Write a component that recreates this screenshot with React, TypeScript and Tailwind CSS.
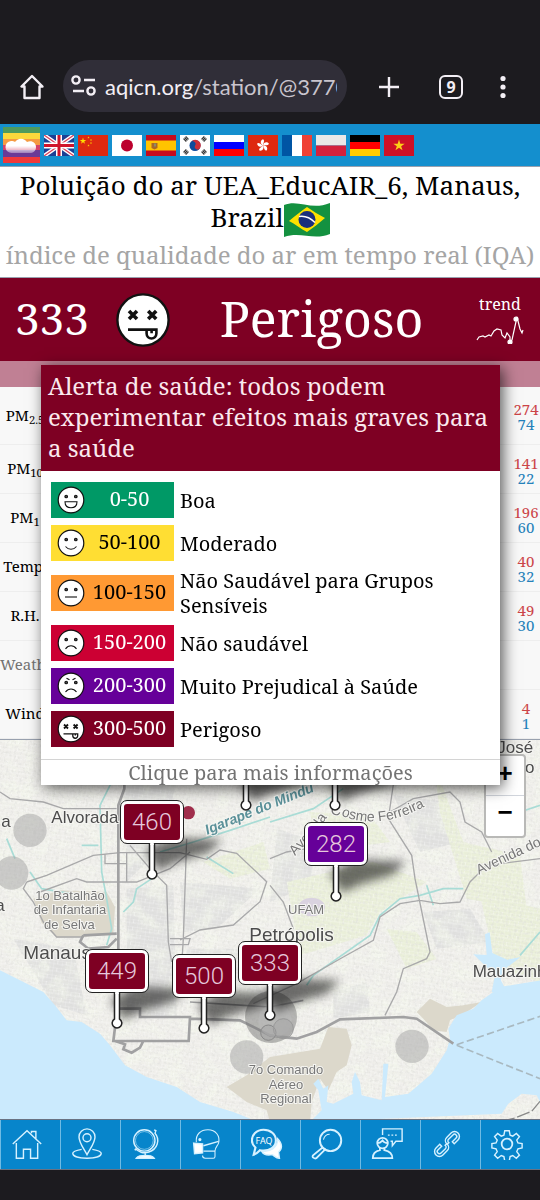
import type { ReactNode } from "react";
import clsx from "clsx";

type Mood = "laugh" | "smile" | "flat" | "sad" | "angry" | "dead";

const levels: { range: string; label: string; mood: Mood; className: string }[] = [
  { range: "0-50", label: "Boa", mood: "laugh", className: "bg-[#009966] text-white" },
  { range: "50-100", label: "Moderado", mood: "smile", className: "bg-[#ffde33] text-black" },
  { range: "100-150", label: "Não Saudável para Grupos Sensíveis", mood: "flat", className: "bg-[#ff9933] text-black" },
  { range: "150-200", label: "Não saudável", mood: "sad", className: "bg-[#cc0033] text-white" },
  { range: "200-300", label: "Muito Prejudical à Saúde", mood: "angry", className: "bg-[#660099] text-white" },
  { range: "300-500", label: "Perigoso", mood: "dead", className: "bg-[#7e0023] text-white" },
];

const readings = [
  { name: "PM", sub: "2.5", max: "274", min: "74" },
  { name: "PM", sub: "10", max: "141", min: "22" },
  { name: "PM", sub: "1", max: "196", min: "60" },
  { name: "Temp.", max: "40", min: "32" },
  { name: "R.H.", max: "49", min: "30" },
  { name: "Weather", muted: true },
  { name: "Wind", max: "4", min: "1" },
];

// x / y is the tip of the pin on the map canvas
const pins = [
  { x: 246, y: 67 },
  { x: 335, y: 67 },
  { value: "460", x: 152, y: 136, className: "bg-[#7e0023]" },
  { value: "282", x: 336, y: 158, className: "bg-[#660099]" },
  { value: "449", x: 117, y: 285, className: "bg-[#7e0023]" },
  { value: "500", x: 204, y: 290, className: "bg-[#7e0023]" },
  { value: "333", x: 270, y: 277, className: "bg-[#7e0023]" },
];

function Face({ mood, className }: { mood: Mood; className?: string }) {
  return (
    <svg viewBox="0 0 28 28" className={className} fill="none" stroke="#111" strokeWidth="1.1" aria-hidden="true">
      <circle cx="14" cy="14" r="12.8" fill="#fff" strokeWidth="1.2" />
      {mood === "dead" ? (
        <g strokeWidth="1.8">
          <path d="M7 9.500l4 4M11 9.500l-4 4M16.600 9.500l4 4M20.600 9.500l-4 4" />
          <path d="M6.500 18.800h14.200v2a2.400 2.400 0 0 1-4.900 0v-2M18.300 18.800v1.800" strokeWidth="1.300" />
        </g>
      ) : (
        <g>
          <circle cx="9.2" cy="10.5" r="1.3" fill="#555" />
          <circle cx="18.8" cy="10.5" r="1.3" fill="#555" />
        </g>
      )}
      {mood === "laugh" && <path d="M8 15.7h12c0 4-2.5 6-6 6s-6-2-6-6z" />}
      {mood === "smile" && <path d="M8.5 17.5c3 3.6 8 3.6 11 0" />}
      {mood === "flat" && <path d="M8 18h12" />}
      {mood === "sad" && <path d="M8.5 19.8c3-4 8-4 11 0" />}
      {mood === "angry" && (
        <g>
          <path d="M8.5 20c3-4 8-4 11 0" />
          <path d="M9.5 6.2l3 1.6M18.5 6.2l-3 1.6" />
        </g>
      )}
    </svg>
  );
}

function Logo() {
  return (
    <svg viewBox="0 0 37 36" className="h-9 w-[37px]" aria-hidden="true">
      <rect width="37" height="6" fill="#4f9a5c" />
      <rect y="6" width="37" height="6" fill="#fbd83c" />
      <rect y="12" width="37" height="6" fill="#f59b42" />
      <rect y="18" width="37" height="5" fill="#d5436a" />
      <rect y="23" width="37" height="7" fill="#6a3a96" />
      <rect y="30" width="37" height="6" fill="#f0393a" />
      <defs>
        <linearGradient id="cloud" x1="0" y1="0" x2="0" y2="1">
          <stop offset="0.5" stopColor="#fff" />
          <stop offset="1" stopColor="#fff" stopOpacity="0.35" />
        </linearGradient>
      </defs>
      <path d="M9 26a6 6 0 0 1-1-12c2 0 3 0 4 1a7 6.500 0 0 1 12 0c5-2 9 1 9 5s-3 6-6 6z" fill="url(#cloud)" />
    </svg>
  );
}

const star = "M0-1 .22-.31H.95L.36.12.59.81 0 .38-.59.81-.36.12-.95-.31H-.22z";

const flags: { lang: string; art: ReactNode }[] = [
  {
    lang: "English",
    art: (
      <>
        <path fill="#1d3f94" d="M0 0h30v21H0z" />
        <path d="M0 0l30 21M30 0L0 21" stroke="#fff" strokeWidth="4" />
        <path d="M0 0l30 21M30 0L0 21" stroke="#d8405a" strokeWidth="1.3" />
        <path d="M15 0v21M0 10.500h30" stroke="#fff" strokeWidth="6" />
        <path d="M15 0v21M0 10.500h30" stroke="#cf142b" strokeWidth="3" />
      </>
    ),
  },
  {
    lang: "中文",
    art: (
      <>
        <path fill="#de2910" d="M0 0h30v21H0z" />
        <g fill="#ffde00">
          <path d={star} transform="translate(5 6) scale(3.400)" />
          <path d={star} transform="translate(10.500 2.500) scale(1.200)" />
          <path d={star} transform="translate(13 5) scale(1.200)" />
          <path d={star} transform="translate(13 8) scale(1.200)" />
          <path d={star} transform="translate(10.500 10.500) scale(1.200)" />
        </g>
      </>
    ),
  },
  {
    lang: "日本語",
    art: (
      <>
        <path fill="#fff" d="M0 0h30v21H0z" />
        <circle cx="15" cy="10.500" r="6" fill="#bc002d" />
      </>
    ),
  },
  {
    lang: "Español",
    art: (
      <>
        <path fill="#c60b1e" d="M0 0h30v21H0z" />
        <path fill="#ffc400" d="M0 5.500h30v10H0z" />
        <path fill="#a8672a" d="M5.500 8h6v5l-3 1.500L5.500 13z" />
        <path fill="#8c8c6a" d="M8 8.500h2v3H8z" />
      </>
    ),
  },
  {
    lang: "한국어",
    art: (
      <>
        <path fill="#fff" d="M0 0h30v21H0z" />
        <circle cx="15" cy="10.500" r="5.500" fill="#0f4a9c" />
        <path d="M10.400 7.500a5.500 5.500 0 0 1 9.700 5.500 2.700 2.700 0 0 1-5-2.500 2.700 2.700 0 0 0-4.700-3z" fill="#cd2e3a" />
        <path d="M4.500 5.500l3-3M22.500 2.500l3 3M4.500 15.500l3 3M22.500 18.500l3-3" stroke="#333" strokeWidth="4" strokeDasharray="1.200 .400" />
      </>
    ),
  },
  {
    lang: "Русский",
    art: (
      <>
        <path fill="#fff" d="M0 0h30v7H0z" />
        <path fill="#00f" d="M0 7h30v7H0z" />
        <path fill="#f00" d="M0 14h30v7H0z" />
      </>
    ),
  },
  {
    lang: "繁體中文",
    art: (
      <>
        <path fill="#de2910" d="M0 0h30v21H0z" />
        <g fill="#fff" transform="translate(15 10.500)">
          {[0, 72, 144, 216, 288].map((a) => (
            <path key={a} d="M0 0C-3-1.500-3-5 0-6.200 2-5 .5-3 0 0z" transform={`rotate(${a})`} />
          ))}
        </g>
      </>
    ),
  },
  {
    lang: "Français",
    art: (
      <>
        <path fill="#0055a4" d="M0 0h10v21H0z" />
        <path fill="#fff" d="M10 0h10v21H10z" />
        <path fill="#ef4135" d="M20 0h10v21H20z" />
      </>
    ),
  },
  {
    lang: "Polski",
    art: (
      <>
        <path fill="#e9e8e7" d="M0 0h30v10.500H0z" />
        <path fill="#d4213d" d="M0 10.500h30V21H0z" />
      </>
    ),
  },
  {
    lang: "Deutsch",
    art: (
      <>
        <path fill="#000" d="M0 0h30v7H0z" />
        <path fill="#f00" d="M0 7h30v7H0z" />
        <path fill="#fc0" d="M0 14h30v7H0z" />
      </>
    ),
  },
  {
    lang: "Tiếng Việt",
    art: (
      <>
        <path fill="#ce1126" d="M0 0h30v21H0z" />
        <path d={star} transform="translate(15 10.500) scale(6)" fill="#fcd116" />
      </>
    ),
  },
];

const tools: { name: string; icon: ReactNode }[] = [
  {
    name: "Home",
    icon: <path d="M2 18L18 3l16 15M6 17v17h8V24h8v10h8V17M23 6V4h5v8" />,
  },
  {
    name: "Location",
    icon: (
      <>
        <path d="M18 30C13 21 9 16 9 10a9 9 0 0 1 18 0c0 6-4 11-9 20z" />
        <circle cx="18" cy="11" r="4.500" />
        <path d="M12 24C6 25 2 26 2 28.500 2 32 9 34 18 34s16-2 16-5.500c0-2.500-4-3.500-10-4.500" />
      </>
    ),
  },
  {
    name: "World",
    icon: (
      <>
        <circle cx="15" cy="14" r="12" />
        <circle cx="15" cy="14" r="10" strokeWidth=".6" />
        <path d="M26 2l2 1-1 3c6 7 3 18-7 21-6 2-12 0-15-4M4 24l2 1M16 28v4" />
        <path d="M6 34c2-3 5-3 10-3s8 0 10 3z" fill="#fff" />
      </>
    ),
  },
  {
    name: "Mask",
    icon: (
      <>
        <path d="M6 16C5 7 11 2 19 2c9 0 14 7 12 15-1 3-4 5-4 9v6c0 1-1 2-2 2h-9c-2 0-3-1-3-3" strokeWidth="1.2" />
        <path d="M14 20l17-5M14 26h13" />
        <path d="M3 17l10 1v10l-9 1z" fill="#fff" />
        <circle cx="10" cy="13" r="1" fill="#fff" />
      </>
    ),
  },
  {
    name: "FAQ",
    icon: (
      <>
        <path d="M30 12c6 6 5 12 1 15l1 7c-4 0-6-3-8-4-5 1-10 0-12-4 10 1 18-4 18-14z" fill="#fff" />
        <path
          d="M14 2C6 2 1 8 1 14c0 4 2 6 4 8l-2 8c4-1 5-3 7-5 11 2 18-4 18-11S22 2 14 2z"
          fill="#0785cb"
          strokeWidth="2.400"
        />
        <text x="14.500" y="18" fontSize="10" fontFamily="Noto Sans, sans-serif" textAnchor="middle" fill="#fff" stroke="none">
          FAQ
        </text>
      </>
    ),
  },
  {
    name: "Search",
    icon: (
      <>
        <circle cx="22" cy="14" r="12" strokeWidth="2.200" />
        <path d="M14 13c1-4 4-6 7-6" strokeWidth="1.2" />
        <path d="M13 22L2 31c-1 2 2 4 4 3l10-10z" strokeWidth="2" />
      </>
    ),
  },
  {
    name: "Community",
    icon: (
      <>
        <path d="M13 8V1h22v14h-7l-4 5v-5h-2M19 8h2M23 8h2M27 8h2" />
        <circle cx="13" cy="17" r="6" strokeWidth="2" />
        <path d="M7 17c4 0 5-2 6-3 1 2 3 3 6 3M10 22v3c-5 1-8 3-8 9h22c0-6-4-8-9-9v-3" strokeWidth="2" />
      </>
    ),
  },
  {
    name: "Links",
    icon: (
      <g transform="rotate(-45 18 18)">
        <path d="M18 18h-2v-1a5 5 0 0 1 5-5h7a5.500 5.500 0 0 1 0 11h-6v-3h6a2.500 2.500 0 0 0 0-5h-7a2.500 2.500 0 0 0-2.500 3z" transform="translate(2 .5)" />
        <path d="M18 18h2v1a5 5 0 0 1-5 5H8a5.500 5.500 0 0 1 0-11h6v3H8a2.500 2.500 0 0 0 0 5h7a2.500 2.500 0 0 0 2.500-3z" transform="translate(-2 -.5)" />
      </g>
    ),
  },
  {
    name: "Settings",
    icon: (
      <>
        <circle cx="18" cy="18" r="6" strokeWidth="2" />
        <path d="M15.500 3h5l1 5 3 1.200 4-3 3.500 3.500-3 4 1.300 3 4.700.800v5l-4.700 1-1.300 3 3 4-3.500 3.500-4-3-3 1.200-1 5h-5l-1-5-3-1.200-4 3L4 30.500l3-4-1.300-3-4.700-1v-5l4.700-.800 1.300-3-3-4L7.500 6.200l4 3 3-1.200z" />
      </>
    ),
  },
];

function BrowserBar() {
  return (
    <header className="flex h-[124px] items-end bg-[#1c1b1f] pb-3 pl-5 text-[#f3eff5]">
      <button aria-label="Home" className="flex h-[50px] w-6 shrink-0 items-center">
        <svg viewBox="0 0 24 26" className="h-[26px] w-6" fill="none" stroke="currentColor" strokeWidth="2.400" strokeLinejoin="round">
          <path d="M1.500 12.500H4.500v11.500h15V12.500h3L12 2z" />
        </svg>
      </button>
      <button className="ml-[19px] flex h-[52px] min-w-0 flex-1 items-center rounded-full bg-[#302e38] pr-[10px] pl-2 font-[Lato,sans-serif] text-[22px]">
        <svg viewBox="0 0 26 22" className="h-[22px] w-[26px] shrink-0" fill="none" stroke="currentColor" strokeWidth="2.400">
          <circle cx="5" cy="5" r="3.600" />
          <path d="M13 5h11M2 16h11" />
          <circle cx="20" cy="16" r="3.600" />
        </svg>
        <span className="ml-2 min-w-0 flex-1 overflow-hidden text-left whitespace-nowrap">
          aqicn.org<span className="text-[#c9c5ce]">/station/@3770</span>
        </span>
      </button>
      <button aria-label="New tab" className="ml-[30px] flex h-[50px] w-6 shrink-0 items-center">
        <svg viewBox="0 0 24 24" className="size-6" stroke="currentColor" strokeWidth="2.400">
          <path d="M12 2v20M2 12h20" />
        </svg>
      </button>
      <button aria-label="Tabs" className="ml-[38px] flex h-[50px] w-6 shrink-0 items-center">
        <span className="flex size-6 items-center justify-center rounded-md border-2 border-current font-['Open_Sans',sans-serif] text-base leading-5 font-bold">
          9
        </span>
      </button>
      <button aria-label="More" className="mr-[25px] ml-7 flex h-[50px] w-6 shrink-0 items-center">
        <svg viewBox="0 0 24 24" className="size-6" fill="currentColor">
          <circle cx="12" cy="3.500" r="2.600" />
          <circle cx="12" cy="12" r="2.600" />
          <circle cx="12" cy="20.500" r="2.600" />
        </svg>
      </button>
    </header>
  );
}

function BrazilFlag() {
  return (
    <svg viewBox="0 0 46 36" className="inline-block h-9 w-[46px] align-middle" aria-label="Brazil">
      <path d="M0 3c15-6 27 6 46-2v31c-17 7-29-3-46 3z" fill="#149140" />
      <path d="M5 19C11 14 17 9 23 5c6 4 12 8 18 11-6 5-12 10-18 14C17 27 11 22 5 19z" fill="#fde100" />
      <circle cx="23" cy="17.500" r="8.500" fill="#1a2f7c" />
      <path d="M15 14.500c6-1 12 2 16 6" stroke="#fff" strokeWidth="1.500" fill="none" />
    </svg>
  );
}

// The canvas uses three units per pixel
function MapDrawing() {
  return (
    <svg viewBox="0 -126 1620 1140" preserveAspectRatio="xMinYMin slice" className="absolute inset-0 size-full" fill="none" aria-hidden="true">
      <defs>
        <filter id="terrain" x="0" y="0" width="1" height="1">
          <feTurbulence type="fractalNoise" baseFrequency="0.02" numOctaves="4" seed="8" />
          <feColorMatrix values="0 0 0 0 .91  0 0 0 0 .94  0 0 0 0 .84  3 0 0 0 -1.200" />
        </filter>
        <filter id="grain" x="0" y="0" width="1" height="1">
          <feTurbulence type="fractalNoise" baseFrequency="0.12" numOctaves="3" seed="3" />
          <feColorMatrix values="0 0 0 0 .72  0 0 0 0 .72  0 0 0 0 .70  3 0 0 0 -1.400" />
        </filter>
        <filter id="soft" x="-50%" y="-50%" width="200%" height="200%">
          <feGaussianBlur stdDeviation="14" />
        </filter>
        <pattern id="streets" width="26" height="22" patternUnits="userSpaceOnUse" patternTransform="rotate(8)">
          <path d="M0 0h26M0 0v22M13 0v11M0 11h26" stroke="#fff" strokeWidth="2" strokeOpacity=".5" />
        </pattern>
      </defs>

      <rect y="-126" width="1620" height="1140" fill="#efeeea" />
      <g fill="#e0e0df">
        <path d="M370 -60L540 -40 480 200 380 300zM380 320l140-10 10 400-150-20zM540 300l240 20-130 120-100 10zM560 500h160l70 140-230 10zM830 140l120 40-20 130-120 50zM1180 40l160 20 40 120-120 30zM1270 390l140-10 60 100-160 20zM1000 630l100-30 10 90-110 20zM40 470l180 30 40 200-100-30z" />
      </g>
      <rect y="-126" width="1620" height="1140" filter="url(#terrain)" opacity=".6" />
      <g fill="#eaefd9">
        <path d="M610 240l180-60 20 80-120 30zM860 300l260-60 160 60-140 90-40 70-200 60zM1300 -60l90 240 170 40 20 160-180-30-80-260zM1160 440l90 10 60 80-90 30zM1440 340l180 40v220l-130-40zM930 90l180 10 60 80-220 30z" />
      </g>
      <rect y="-126" width="1620" height="1140" fill="url(#streets)" />
      <rect y="-126" width="1620" height="1140" filter="url(#grain)" opacity=".5" />

      <g fill="#dcd8cb">
        <path d="M100 350l80-25 140 5 25 45-5 78-90 12-80 2-45-45z" />
        <path d="M680 915l60-35 70-55 150-25 25-65 55 5 15 50-15 60-30 20-25 55-25-35-25 70-5 60H810l-10-35-60-25z" />
        <path d="M1250 690l40-40 50 25 50-5 55-10-45 30-50 25-10 35-40-5-30-35z" />
      </g>
      <ellipse cx="935" cy="375" rx="40" ry="28" fill="#dad3e0" />

      <g fill="#cbeafd">
        <path d="M0 565l60 30 70 35 35 40 35 45 45 5 55 35 30 35 45 60 65 35 90 30 70 45 100 30 60 24H0z" />
        <path d="M930 1020l35-35-10-60-15-20 15-15 15 30 15-10-5 50 20 5 60-30-5-35 10-30 15 30 5 40 60 15 5-110h15l-10 100 70-10 70-60 45-70 10-35-5-30 25-40 50-20 25-25 35-25 20-15 60-10 65-10v375l-15-30-45-5-40 30-20 30z" />
        <path d="M1475 630l10-50-15-15-50-48 40 2-5-62 14-6 8 62 45 20 40-8-50 38-10 30 20 40z" />
      </g>

      <g stroke="#a9dcd6" strokeWidth="5">
        <path d="M350 -30l-50 100 5 200 15 80 15 90-15 50M245 190h50M20 170l25 60M90 270l35 50 120 20M810 120l130-40 90-60M370 390l30-30 10-40 60-40M480 210l100-30 110-35 120-40M620 225l80 50M920 610l20-30 170-120 30-60 60-50 60-10 70-20h60M1280 310l20 60M1560 520l60-70M1560 90l60-20" />
      </g>

      <g stroke="#a9a9aa" strokeWidth="4">
        <path d="M0 30l30 20 100 10 60 20h160M80 300l60-20 140-60 80-8h180l80 20 40-28 50 10 90 85-20 60-80 70-100 15-60 30M80 300l-10 20 30 40 30 60 40 45h80M120 330l110-40 30 10h150l100-40 60-50M380 210v90M390 190l60 70 50 50 5 170 10 60M560 170l-10 300-5 80M510 470h60l-5 18h-55M315 215v30h65" />
        <path d="M810 230l50-20 60-10M810 310l40 50 30 80M1190 -60l-25 170 70 110 10 70 45 220-10 20-70 30-20 70-35 70M1170 90l70-40 110-20 30 30 15 60 50 30 30 60M1620 230l-160 20-50 50-30 60-60 5-60-10-60 10-60 40-20 70-90 50-140 80-130 60" />
      </g>
      <g stroke="#a1a1a2" strokeWidth="8">
        <path d="M355 540V70l18-50v-150" />
        <path d="M250 460l100-5M250 460l-10 20 25 20 60-5 25-25M345 680h75v25h150l-4 72H340l5-40M345 777l30 10-5 15 25 10 25-15 10-20M570 710l150 5 90 45 80 10 60-20 70-38 190-7 40 5 110 75" />
        <path d="M570 660l240 15 100-20" strokeWidth="5" />
      </g>
      <path d="M1370 788l250-85M1370 790l250 100" stroke="#a9b9c0" strokeWidth="5" strokeDasharray="22 10" />
      <path d="M1505 1018l40-10 50-20 25-30" stroke="#888" strokeWidth="4" strokeDasharray="40 8" />

      <g fill="#a3a3a3" fillOpacity=".5">
        <circle cx="90" cy="145" r="50" />
        <circle cx="35" cy="273" r="50" />
        <circle cx="740" cy="825" r="50" />
        <circle cx="1236" cy="793" r="50" />
        <circle cx="813" cy="705" r="78" fill="#777" />
        <circle cx="825" cy="715" r="50" fill="#bbb" />
        <circle cx="805" cy="752" r="23" stroke="#888" strokeWidth="3" />
        <circle cx="850" cy="740" r="30" stroke="#999" strokeWidth="3" />
      </g>
      <circle cx="565" cy="92" r="20" fill="#a02f4c" />

      <g fill="#000" fillOpacity=".55" filter="url(#soft)">
        {pins.map((pin) => (
          <path key={pin.x} d="M-20-75l70-40 160 5-40 40-100 30-50 25z" transform={`translate(${pin.x * 3} ${pin.y * 3 - 126})`} />
        ))}
      </g>

      <g fill="#4c4c4c" fontFamily="Liberation Sans, sans-serif" stroke="#f5f5f2" strokeWidth="6" paintOrder="stroke">
        <text x="154" y="122" fontSize="51">Alvorada</text>
        <text x="4" y="134" fontSize="51">a</text>
        <text x="-14" y="388" fontSize="51">a</text>
        <text x="70" y="532" fontSize="57">Manaus</text>
        <text x="748" y="478" fontSize="57">Petrópolis</text>
        <text x="1418" y="585" fontSize="51">Mauazinho</text>
        <text x="1492" y="-86" fontSize="51">José</text>
        <text x="1575" y="-28" fontSize="51">o</text>
        <g fill="#777" fontSize="39">
          <text x="864" y="395">UFAM</text>
          <g textAnchor="middle">
            <text x="210" y="353">1o Batalhão</text>
            <text x="210" y="396">de Infantaria</text>
            <text x="208" y="442">de Selva</text>
            <text x="858" y="876">7o Comando</text>
            <text x="858" y="920">Aéreo</text>
            <text x="858" y="962">Regional</text>
          </g>
        </g>
        <g fill="#777" fontSize="42">
          <path id="ferreira" d="M885 222C910 190 950 160 970 122 985 95 1010 95 1040 107 1140 135 1210 110 1320 50" stroke="none" fill="none" />
          <text>
            <textPath href="#ferreira">Avenida Cosme Ferreira</textPath>
          </text>
          <text transform="translate(1436 278) rotate(-25)">Avenida do</text>
        </g>
        <text transform="translate(622 158) rotate(-22)" fontSize="42" fill="#5b9199" fontWeight="bold" fontStyle="italic">
          Igarape do Mindu
        </text>
      </g>
    </svg>
  );
}

function StationMap() {
  return (
    <section className="relative min-h-[380px] flex-1 overflow-hidden border-t border-gray-400">
      <MapDrawing />
      {pins.map((pin) => (
        <a
          key={pin.x}
          href="#station"
          aria-label={pin.value ?? "Station"}
          className="absolute flex -translate-x-1/2 -translate-y-full flex-col items-center"
          style={{ left: pin.x, top: pin.y + 5 }}
        >
          {pin.value && (
            <span
              className={clsx(
                "flex h-[42px] w-[62px] items-center justify-center rounded-md border-3 border-white font-[Roboto,sans-serif] text-2xl font-light text-[#e6c8dc] outline outline-[#222]",
                pin.className
              )}
            >
              {pin.value}
            </span>
          )}
          <svg viewBox="0 0 12 38" className="h-[38px] w-3" aria-hidden="true">
            <path d="M3.500 0v27a4.800 4.800 0 1 0 5 0V0z" fill="#fff" stroke="#222" strokeWidth="1.500" />
            <path d="M4.200 0h3.600v2H4.200z" fill="#fff" />
          </svg>
        </a>
      ))}
      <div className="absolute top-[14px] right-[14px] flex w-[42px] flex-col rounded border-2 border-[#b9b9b7] bg-white font-['Liberation_Sans',sans-serif] text-[26px] font-bold">
        <button className="h-10 border-b border-gray-300 pb-1 leading-8">+</button>
        <button className="h-10 pb-2 leading-8">−</button>
      </div>
    </section>
  );
}

function HealthPopup() {
  return (
    <aside className="absolute top-1 right-10 left-[41px] z-20 bg-white shadow-[3px_3px_14px_rgba(0,0,0,0.65)]">
      <p className="bg-[#7e0023] px-[7px] pt-[5px] pb-2 text-2xl leading-[31px] text-[#fbe9ee]">
        Alerta de saúde: todos podem experimentar efeitos mais graves para a saúde
      </p>
      <ul className="flex flex-col gap-[7px] px-[10px] pt-[11px] pb-3 text-xl leading-[25px]">
        {levels.map((level) => (
          <li key={level.range} className="flex min-h-9 items-center gap-[6px]">
            <span className={clsx("flex h-9 w-[123px] shrink-0 items-center pl-[6px]", level.className)}>
              <Face mood={level.mood} className="size-7 shrink-0" />
              <span className="flex-1 pb-1 text-center">{level.range}</span>
            </span>
            <span className="max-w-[270px]">{level.label}</span>
          </li>
        ))}
      </ul>
      <a href="#info" className="block border-t border-neutral-300 text-center text-xl leading-[25px] text-neutral-500">
        Clique para mais informações
      </a>
    </aside>
  );
}

export default function App() {
  return (
    <div className="flex min-h-screen flex-col bg-white font-['Noto_Serif','DejaVu_Serif_Condensed','DejaVu_Serif',serif] text-black">
      <BrowserBar />

      <nav className="flex h-[43px] items-center gap-1 border-b border-gray-400 bg-[#148fce] pl-[3px]">
        <a href="#home" aria-label="aqicn">
          <Logo />
        </a>
        {flags.map((flag) => (
          <a key={flag.lang} href="#lang" aria-label={flag.lang}>
            <svg viewBox="0 0 30 21" className="h-[21px] w-[30px]" fill="none">
              {flag.art}
            </svg>
          </a>
        ))}
      </nav>

      <div className="h-[110px] px-1 pt-[2px] text-center">
        <h1 className="text-[26px] leading-8">
          Poluição do ar UEA_EducAIR_6, Manaus, Brazil
          <BrazilFlag />
        </h1>
        <p className="text-2xl leading-[34px] text-[#a5a5a5]">índice de qualidade do ar em tempo real (IQA)</p>
      </div>

      <div className="flex h-[84px] items-center border-t border-gray-400 bg-[#7e0023] text-white">
        <span className="w-[115px] pb-1 pl-[15px] text-[44px]">333</span>
        <Face mood="dead" className="size-14" />
        <span className="flex-1 pb-1 pl-3 text-center text-[50px] leading-none">Perigoso</span>
        <div className="flex w-20 flex-col items-center pb-1 text-base">
          trend
          <svg viewBox="0 0 48 28" className="h-7 w-12" fill="none" stroke="#fff" strokeWidth="1.200" aria-hidden="true">
            <path d="M1 24l2-3 4-1 2 1 4-2 2 1 3-5 3-2 4 1 1 5 3 3 2-5 3 4v5l2-2 5-23 3 12 2 4 1-3" />
            <circle cx="34" cy="26" r="2" fill="#fff" />
            <circle cx="40" cy="3" r="2" fill="#fff" />
          </svg>
        </div>
      </div>

      <section className="relative">
        <div className="h-[26px] bg-[#c08094]" />
        <table className="w-full table-fixed border-collapse bg-[#f8f8f8]">
          <tbody>
            {readings.map((row) => (
              <tr key={row.name + row.sub} className="h-[49px] border-b border-[#eee] first:h-[57px]">
                <th
                  className={clsx(
                    "w-[50px] p-0 text-center text-[15px] font-normal whitespace-nowrap",
                    row.muted && "text-neutral-500"
                  )}
                >
                  {row.name}
                  {row.sub && <sub>{row.sub}</sub>}
                </th>
                <td />
                <td className="w-7 p-0 pt-1 text-center text-[15px] leading-[15px]">
                  <div className="text-[#cc4448]">{row.max}</div>
                  <div className="text-[#2581ba]">{row.min}</div>
                </td>
              </tr>
            ))}
          </tbody>
        </table>
        <HealthPopup />
      </section>

      <StationMap />

      <nav className="grid h-[51px] grid-cols-9 border-y border-gray-500 bg-[#0785cb]">
        {tools.map((tool) => (
          <a
            key={tool.name}
            href="#tool"
            aria-label={tool.name}
            className="flex items-center justify-center border-l border-[#6fbbe4] pr-[7px]"
          >
            <svg viewBox="0 0 36 36" className="size-8" fill="none" stroke="#d6f1ff" strokeWidth="1.600">
              {tool.icon}
            </svg>
          </a>
        ))}
      </nav>
      <div className="h-[31px] bg-[#1c1b1f]" />
    </div>
  );
}
